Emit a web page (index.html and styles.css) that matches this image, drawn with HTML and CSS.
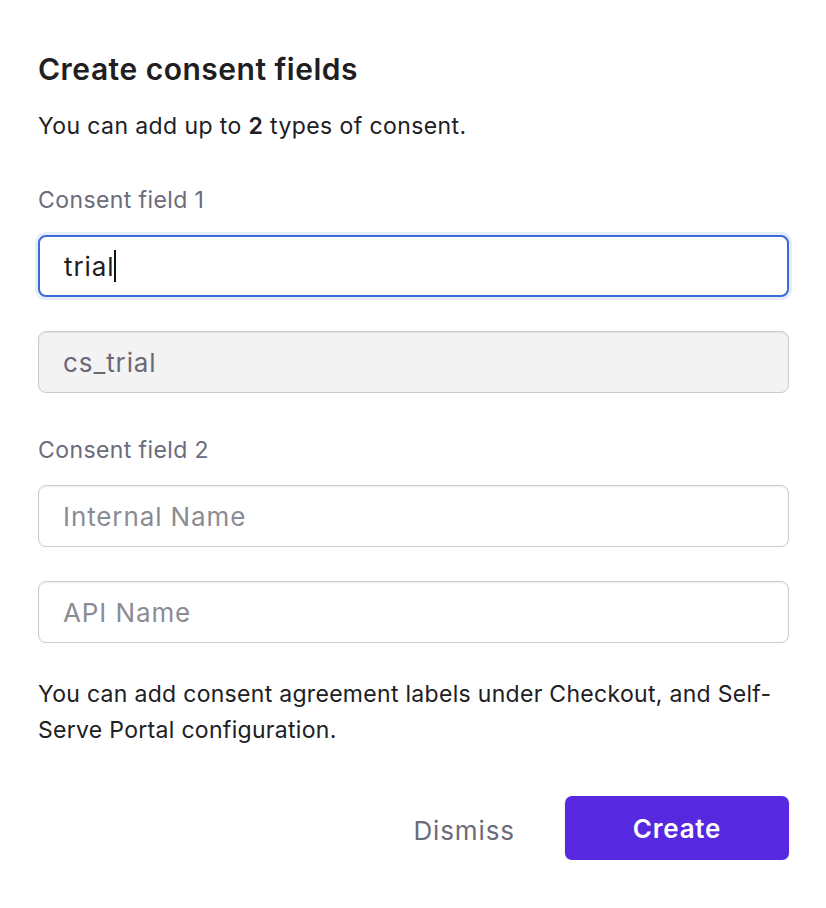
FILE: index.html
```html
<!DOCTYPE html>
<html>
<head>
<meta charset="utf-8">
<link rel="stylesheet" href="styles.css">
</head>
<body>
<div class="dialog">
  <h1 class="title">Create consent fields</h1>
  <p class="intro">You can add up to <b>2</b> types of consent.</p>

  <div class="group first">
    <div class="label">Consent field 1</div>
    <div class="fields">
      <div class="input focused"><span class="value">trial</span><span class="caret"></span></div>
      <div class="input disabled"><span class="value muted">cs_trial</span></div>
    </div>
  </div>

  <div class="group second">
    <div class="label">Consent field 2</div>
    <div class="fields">
      <div class="input"><span class="placeholder">Internal Name</span></div>
      <div class="input"><span class="placeholder">API Name</span></div>
    </div>
  </div>

  <p class="note">You can add consent agreement labels under Checkout, and Self-Serve Portal configuration.</p>

  <div class="actions">
    <button class="btn-link">Dismiss</button>
    <button class="btn-primary">Create</button>
  </div>
</div>
</body>
</html>
```
FILE: styles.css
```css
html, body {
  margin: 0;
  padding: 0;
  background: #ffffff;
}
body {
  font-family: Inter, "Noto Sans", sans-serif;
  color: #202024;
}
.dialog {
  width: 751px;
  padding: 49px 0 0 38px;
  display: flex;
  flex-direction: column;
}
.title {
  margin: 0;
  font-size: 30px;
  line-height: 40px;
  font-weight: 600;
  letter-spacing: 0.5px;
  color: #1f1f23;
}
.intro {
  margin: 22px 0 0;
  font-size: 23px;
  line-height: 30px;
  letter-spacing: 0.4px;
}
.intro b { font-weight: 600; }
.group {
  display: flex;
  flex-direction: column;
  gap: 20px;
}
.group.first { margin-top: 44px; }
.group.second { margin-top: 42px; }
.fields {
  display: flex;
  flex-direction: column;
  gap: 34px;
}
.label {
  font-size: 23px;
  line-height: 30px;
  letter-spacing: 0.4px;
  color: #6b6b7a;
}
.input {
  height: 62px;
  box-sizing: border-box;
  border: 1.5px solid #cbcbd0;
  border-radius: 8px;
  padding: 0 24px;
  display: flex;
  align-items: center;
  font-size: 26px;
  letter-spacing: 0.9px;
  background: #fff;
  box-shadow: inset 0 1px 2px rgba(0,0,0,0.07);
}
.input.focused {
  border: 2px solid #3b69d6;
  box-shadow: 0 0 0 3px rgba(59,105,214,0.13);
}
.input.disabled {
  background: #f3f3f4;
}
.value { color: #1e1e22; }
.value.muted { color: #696977; }
.placeholder { color: #8b8b93; }
.caret {
  display: inline-block;
  width: 2px;
  height: 32px;
  background: #111;
  margin-left: 0;
}
.note {
  margin: 33px 0 0;
  font-size: 23px;
  line-height: 36px;
  letter-spacing: 0.3px;
}
.actions {
  margin-top: 48px;
  display: flex;
  justify-content: flex-end;
  align-items: center;
  gap: 50px;
}
.btn-link {
  border: none;
  background: none;
  font-family: inherit;
  font-size: 26px;
  letter-spacing: 0.9px;
  color: #6b6b7a;
  padding: 0;
  margin-top: 4px;
}
.btn-primary {
  width: 224px;
  height: 64px;
  border: none;
  border-radius: 7px;
  background: #5629e0;
  color: #fff;
  font-family: inherit;
  font-size: 26px;
  font-weight: 600;
  letter-spacing: 0.8px;
  box-shadow: 0 2px 3px rgba(0,0,0,0.12);
}
```
